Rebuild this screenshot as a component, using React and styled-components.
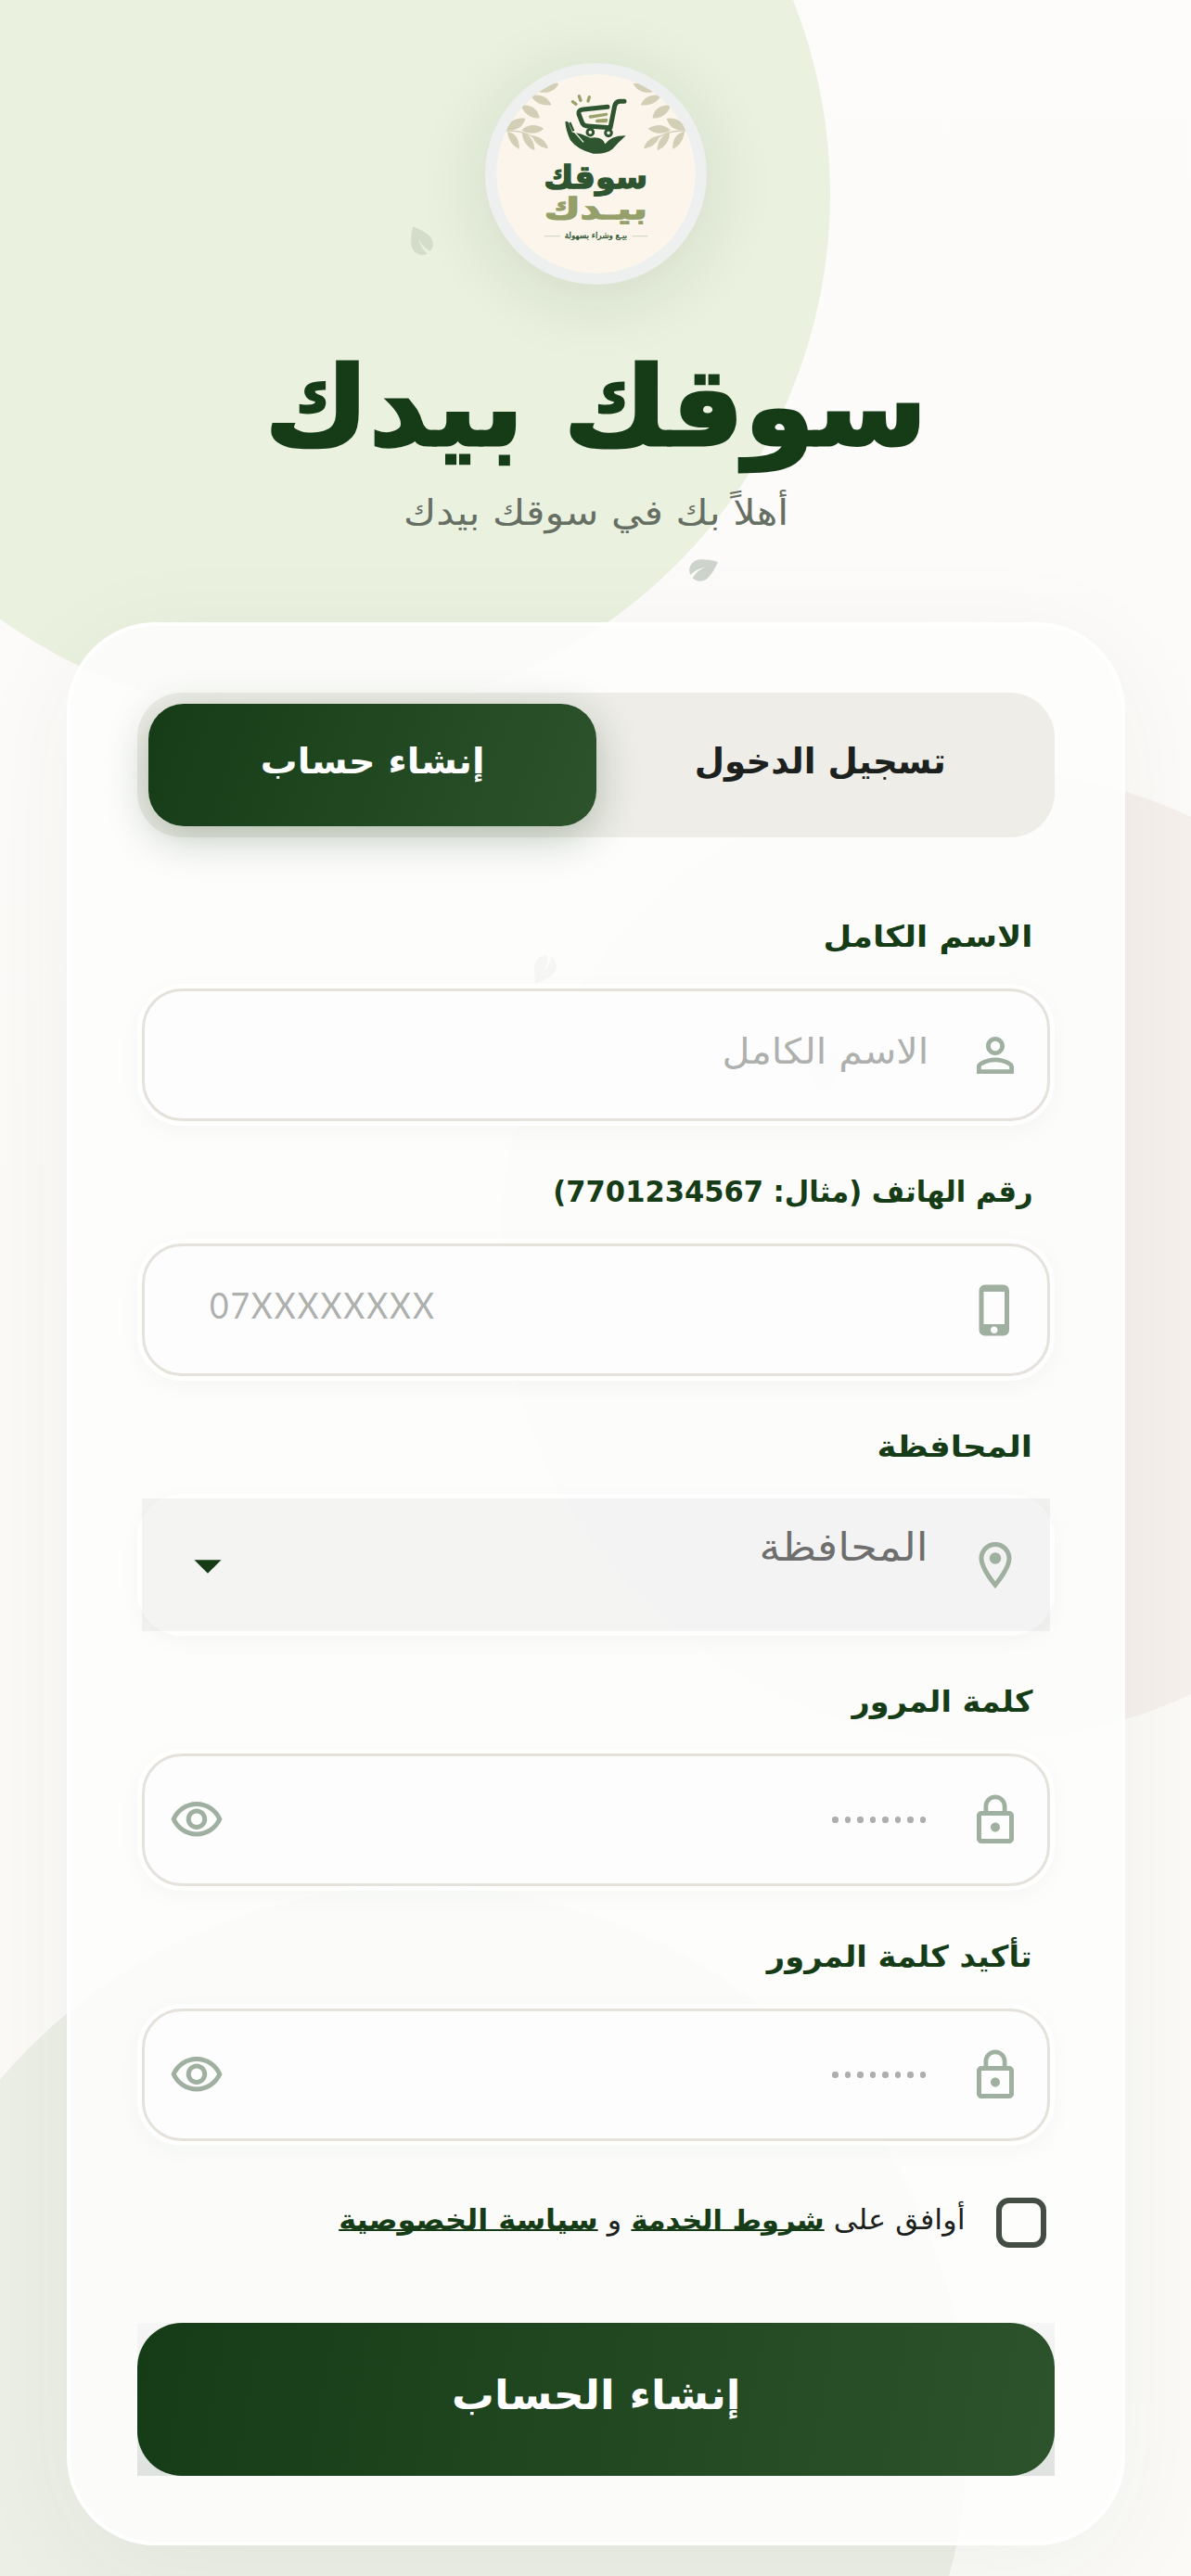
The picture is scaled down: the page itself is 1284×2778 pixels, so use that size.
import React, { useState } from 'react';
import styled, { createGlobalStyle } from 'styled-components';
import {
  MdEco,
  MdPersonOutline,
  MdPhoneIphone,
  MdOutlineLocationOn,
  MdLockOutline,
  MdOutlineVisibility,
  MdArrowDropDown
} from 'react-icons/md';

const GlobalStyle = createGlobalStyle`
  * {
    box-sizing: border-box;
  }

  body {
    margin: 0;
    background: #fcfbf9;
    color: #1c211e;
    font-family: 'DejaVu Sans', 'Noto Sans', sans-serif;
  }
`;

const Page = styled.div`
  position: relative;
  width: 1284px;
  height: 2778px;
  padding: 68px 71px 0 72px;
  overflow: hidden;
  background: linear-gradient(180deg, #fdfcfb 0%, #fcfaf7 50%, #fbfaf7 100%);
`;

const Blob = styled.div`
  position: absolute;
  width: ${(p) => p.$r * 2}px;
  height: ${(p) => p.$r * 2}px;
  left: ${(p) => p.$x - p.$r}px;
  top: ${(p) => p.$y - p.$r}px;
  border-radius: 50%;
  background: ${(p) => p.$color};
`;

const Leaf = styled(MdEco)`
  position: absolute;
  left: ${(p) => p.$x}px;
  top: ${(p) => p.$y}px;
  color: #163c17;
  opacity: ${(p) => p.$o};
  transform: rotate(${(p) => p.$a}deg);
`;

const Header = styled.header`
  position: relative;
  display: flex;
  flex-direction: column;
  align-items: center;
  height: 603px;
`;

const LogoRing = styled.div`
  width: 239px;
  height: 239px;
  border: 12px solid #edf0ee;
  border-radius: 50%;
  background: #fbf5ec;
  background-clip: padding-box;
  overflow: hidden;
  box-shadow: 0 12px 80px rgba(22, 60, 23, 0.12);

  svg {
    display: block;
  }
`;

/* Stretches a line of text horizontally around its own anchor edge */
const Fit = styled.span`
  display: inline-block;
  white-space: nowrap;
  transform: scaleX(${(p) => p.$sx || 1});
  transform-origin: ${(p) => p.$origin || 'center'};
`;

const Title = styled.h1`
  margin: 52px 0 0;
  height: 160px;
  line-height: 160px;
  font-size: 118px;
  font-weight: 700;
  color: #163c17;
  -webkit-text-stroke: 3px #163c17;
`;

const Subtitle = styled.p`
  margin: -2px 0 0;
  height: 72px;
  line-height: 72px;
  font-size: 38px;
  color: #666f64;
`;

const Card = styled.main`
  position: relative;
  height: 2074px;
  padding: 72px;
  border: 4px solid rgba(255, 255, 255, 0.8);
  border-radius: 96px;
  background: rgba(253, 253, 252, 0.9);
  box-shadow: 0 24px 120px rgba(22, 60, 23, 0.05);
`;

const Tabs = styled.div`
  display: flex;
  height: 156px;
  padding: 12px;
  border-radius: 48px;
  background: #eeede8;
`;

const Tab = styled.button`
  flex: 1;
  padding: 0 0 8px;
  border: none;
  border-radius: 38px;
  font-family: inherit;
  font-size: 38px;
  font-weight: 700;
  color: ${(p) => (p.$active ? '#fff' : '#1c211e')};
  background: ${(p) => (p.$active ? 'linear-gradient(110deg, #163c17, #2d532c)' : 'none')};
  box-shadow: ${(p) => (p.$active ? '0 12px 45px rgba(22, 60, 23, 0.28)' : 'none')};
`;

const Form = styled.form`
  padding-top: 36px;
`;

const Label = styled.label`
  display: block;
  height: 122px;
  padding: 41px 24px 0 0;
  line-height: 60px;
  font-size: 32px;
  font-weight: 700;
  color: #163c17;
`;

const Field = styled.div`
  height: 153px;
  padding: 5px;
  border-radius: 48px;
  background: rgba(255, 255, 255, 0.7);
  box-shadow: 0 6px 24px rgba(22, 60, 23, 0.03);
`;

const Control = styled.div`
  display: flex;
  align-items: center;
  gap: 24px;
  height: 143px;
  padding: ${(p) => (p.$select ? '0 29px 0 36px' : '0 26px')};
  border: ${(p) => (p.$select ? 'none' : '3px solid #e5e2db')};
  border-radius: ${(p) => (p.$select ? 0 : '43px')};
  background: ${(p) => (p.$select ? 'rgba(0, 0, 0, 0.045)' : 'rgba(252, 252, 251, 0.5)')};

  svg {
    flex: none;
    color: #a0b0a0;
  }
`;

const Arrow = styled.span`
  display: flex;

  svg {
    color: #163c17;
  }
`;

const Placeholder = styled.span`
  flex: 1;
  padding: 0 18px 8px 0;
  font-size: 38px;
  color: #aeb0ae;
`;

const PhonePlaceholder = styled(Placeholder)`
  padding: 0 20px 11px 44px;
  direction: ltr;
  font-family: Lato, sans-serif;
  letter-spacing: 2px;
`;

const SelectValue = styled(Placeholder)`
  padding: 0 18px 39px 0;
  font-size: 42px;
  color: #6d6e6d;
`;

const Dots = styled.span`
  display: flex;
  flex: 1;
  gap: 7px;
  padding-right: 21px;

  i {
    width: 6.5px;
    height: 6.5px;
    border-radius: 50%;
    background: #adafac;
  }
`;

const EyeButton = styled.button`
  display: flex;
  padding: 0;
  border: none;
  background: none;
`;

const Terms = styled.div`
  display: flex;
  align-items: flex-start;
  gap: 33px;
  height: 191px;
  padding: 56px 9px 0 0;
`;

const Checkbox = styled.span`
  flex: none;
  width: 54px;
  height: 54px;
  border: 6px solid #434d43;
  border-radius: 14px;
`;

const TermsText = styled.span`
  line-height: 48px;
  font-size: 30px;
  color: #1c211e;
`;

const TermsLink = styled.a`
  font-size: ${(p) => p.$size || 30}px;
  font-weight: 700;
  color: #163c17;
  text-decoration: underline;
  text-decoration-thickness: 2px;
  text-underline-offset: 0;
  text-decoration-skip-ink: none;
`;

const SubmitWrap = styled.div`
  height: 165px;
  background: linear-gradient(180deg, #f5f6f5, #dfe3df);
`;

const Submit = styled.button`
  width: 100%;
  height: 165px;
  padding: 0 0 10px;
  border: none;
  border-radius: 48px;
  font-family: inherit;
  font-size: 44px;
  font-weight: 700;
  color: #fff;
  background: linear-gradient(100deg, #163c17, #2d532c);
`;

const Sprig = ({ flip }) => (
  <g transform={flip ? 'translate(717 0) scale(-1 1)' : undefined} fill="#d3cfb6">
    <path d="M68 219 C110 218 150 224 200 276" fill="none" stroke="#d3cfb6" strokeWidth="4" />
    <path d="M238 66 C205 62 180 72 176 94 C205 100 228 88 238 66Z" />
    <path d="M148 106 C175 98 205 110 214 136 C185 140 160 128 148 106Z" />
    <path d="M116 138 C145 132 172 148 176 178 C150 182 126 164 116 138Z" />
    <path d="M68 216 C75 190 100 174 130 180 C122 208 98 222 68 216Z" />
    <path d="M118 218 C135 198 165 196 190 212 C170 232 140 230 118 218Z" />
    <path d="M72 222 C100 225 112 250 110 278 C88 268 74 246 72 222Z" />
    <path d="M120 224 C145 232 160 252 160 282 C134 272 120 250 120 224Z" />
    <path d="M152 234 C180 238 198 254 204 276 C178 274 158 258 152 234Z" />
  </g>
);

const Logo = () => (
  <svg width="215" height="215" viewBox="36 36 645 645" direction="rtl">
    <Sprig />
    <Sprig flip />
    <g fill="none" strokeLinecap="round" strokeLinejoin="round">
      <g stroke="#9ba36d" strokeWidth="10">
        <path d="M283 125 L294 133 M304 107 L309 121 M337 110 L333 123" />
        <path d="M340 174 L392 166 M362 187 L392 184 M362 188 L390 188" />
      </g>
      <g stroke="#2f5530" strokeWidth="15">
        <path d="M396 142 L318 150 Q300 152 303 165 L314 193 Q318 203 332 204 L405 209 L419 139 Q422 125 436 124 L450 124" />
        <circle cx="340" cy="224" r="10" strokeWidth="9" />
        <circle cx="399" cy="226" r="10" strokeWidth="9" />
      </g>
    </g>
    <path
      d="M259 190 Q267 184 271 196 L282 224 Q310 226 340 242 Q380 236 388 262 Q408 234 455 235 Q430 258 412 278 Q390 296 350 293 Q300 282 276 250 Q262 222 259 190Z"
      fill="#2f5530"
    />
    <path d="M278 194 L290 224 L318 256" stroke="#fbf5ec" strokeWidth="4" fill="none" />
    <path d="M274 192 L286 220" stroke="#2f5530" strokeWidth="7" fill="none" />
    <g fontFamily="'DejaVu Sans', sans-serif" fontWeight="700" textAnchor="middle">
      <text x="358" y="404" fontSize="104" fill="#2f5530" stroke="#2f5530" strokeWidth="4" textLength="336" lengthAdjust="spacingAndGlyphs">سوقك</text>
      <text x="358" y="504" fontSize="94" fill="#959f69" stroke="#959f69" strokeWidth="4" textLength="334" lengthAdjust="spacingAndGlyphs">بيـدك</text>
      <text x="358" y="568" fontSize="28" fontWeight="400" fill="#2f5530" stroke="#2f5530" textLength="202" lengthAdjust="spacingAndGlyphs">بيـع وشراء بسهولة</text>
    </g>
    <path d="M191 560 H242 M476 560 H526" stroke="#ccd3bd" strokeWidth="3" />
  </svg>
);

const FIELDS = [
  { id: 'name', label: 'الاسم الكامل', labelSx: 1.105, placeholder: 'الاسم الكامل', icon: MdPersonOutline },
  { id: 'phone', label: 'رقم الهاتف (مثال: 7701234567)', labelSx: 0.955, placeholder: '07XXXXXXXX', icon: MdPhoneIphone },
  { id: 'city', label: 'المحافظة', labelSx: 1.11, placeholder: 'المحافظة', icon: MdOutlineLocationOn },
  { id: 'password', label: 'كلمة المرور', labelSx: 1.045, icon: MdLockOutline },
  { id: 'confirm', label: 'تأكيد كلمة المرور', labelSx: 1.052, icon: MdLockOutline }
];

const FieldContent = ({ field }) => {
  if (field.id === 'phone') {
    return (
      <PhonePlaceholder>
        <Fit $sx={0.933} $origin="left">{field.placeholder}</Fit>
      </PhonePlaceholder>
    );
  }

  if (field.id === 'city') {
    return (
      <>
        <SelectValue>
          <Fit $sx={1.1} $origin="right">{field.placeholder}</Fit>
        </SelectValue>
        <Arrow>
          <MdArrowDropDown size={70} />
        </Arrow>
      </>
    );
  }

  if (!field.placeholder) {
    return (
      <>
        <Dots>
          {Array.from({ length: 8 }, (_, i) => (
            <i key={i} />
          ))}
        </Dots>
        <EyeButton type="button">
          <MdOutlineVisibility size={60} />
        </EyeButton>
      </>
    );
  }

  return (
    <Placeholder>
      <Fit $sx={1.085} $origin="right">{field.placeholder}</Fit>
    </Placeholder>
  );
};

const FormField = ({ field }) => {
  const Icon = field.icon;

  return (
    <div>
      <Label>
        <Fit $sx={field.labelSx} $origin="right">{field.label}</Fit>
      </Label>
      <Field>
        <Control $select={field.id === 'city'}>
          <Icon size={60} />
          <FieldContent field={field} />
        </Control>
      </Field>
    </div>
  );
};

const App = () => {
  const [tab, setTab] = useState('register');

  return (
    <>
      <GlobalStyle />
      <Page dir="rtl">
        <Blob $x={330} $y={209} $r={565} $color="#eaf1df" />
        <Blob $x={1061} $y={1354} $r={523} $color="#f6f0ec" />
        <Blob $x={451} $y={2626} $r={592} $color="#ecefe6" />
        <Leaf size={40} $x={434} $y={241} $a={-73} $o={0.1} />
        <Leaf size={40} $x={737} $y={594} $a={20} $o={0.2} />
        <Leaf size={40} $x={567} $y={1024} $a={165} $o={0.3} />
        <Leaf size={58} $x={860} $y={1125} $a={135} $o={0.25} />

        <Header>
          <LogoRing>
            <Logo />
          </LogoRing>
          <Title>
            <Fit $sx={1.04}>سوقك بيدك</Fit>
          </Title>
          <Subtitle>
            <Fit $sx={1.125}>أهلاً بك في سوقك بيدك</Fit>
          </Subtitle>
        </Header>

        <Card>
          <Tabs>
            <Tab $active={tab === 'login'} onClick={() => setTab('login')}>
              <Fit $sx={0.98}>تسجيل الدخول</Fit>
            </Tab>
            <Tab $active={tab === 'register'} onClick={() => setTab('register')}>
              <Fit $sx={1.045}>إنشاء حساب</Fit>
            </Tab>
          </Tabs>

          <Form>
            {FIELDS.map((field) => (
              <FormField key={field.id} field={field} />
            ))}

            <Terms>
              <Checkbox />
              <TermsText>
                <Fit $sx={1.066} $origin="right">
                  أوافق على <TermsLink $size={28.5}>شروط الخدمة</TermsLink> و <TermsLink>سياسة الخصوصية</TermsLink>
                </Fit>
              </TermsText>
            </Terms>

            <SubmitWrap>
              <Submit type="button">
                <Fit $sx={1.04}>إنشاء الحساب</Fit>
              </Submit>
            </SubmitWrap>
          </Form>
        </Card>
      </Page>
    </>
  );
};

export default App;
